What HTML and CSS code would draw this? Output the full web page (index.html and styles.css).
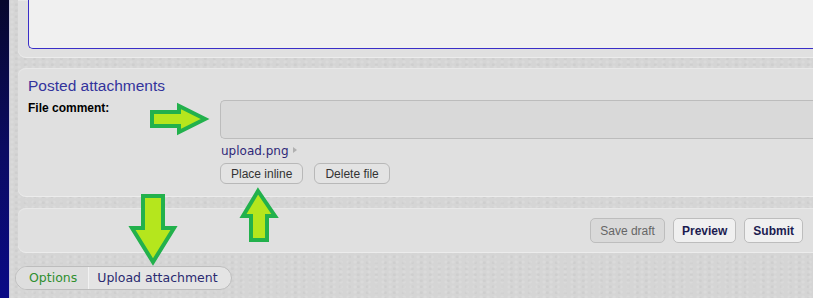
FILE: index.html
```html
<!DOCTYPE html>
<html>
<head>
    <title>Post reply</title>
    <link rel="stylesheet" href="styles.css">
</head>
<body>
    <div class="page">
        <div class="edge"></div>
        <div class="main">
            <div class="panel panel-top">
                <div class="message-box"></div>
            </div>

            <div class="panel panel-attach">
                <h3 class="panel-title">Posted attachments</h3>
                <div class="attach-row">
                    <label class="attach-label">File comment:</label>
                    <div class="attach-body">
                        <div class="comment-box"></div>
                        <div class="file-name">upload.png<span class="file-caret"></span></div>
                        <div class="file-actions">
                            <button class="small-button">Place inline</button>
                            <button class="small-button">Delete file</button>
                        </div>
                    </div>
                </div>
            </div>

            <div class="panel panel-submit">
                <button class="button button-draft">Save draft</button>
                <button class="button button-main">Preview</button>
                <button class="button button-main">Submit</button>
            </div>

            <div class="tabs">
                <span class="tab tab-options">Options</span>
                <span class="tab tab-upload">Upload attachment</span>
            </div>
        </div>
    </div>

    <svg class="arrows" width="813" height="298" viewBox="0 0 813 298">
        <path d="M152,112 L179,112 L179,106 L205,119 L179,132 L179,126 L152,126 Z" />
        <path d="M143,196 L163,196 L163,228 L174,228 L153,262 L132,228 L143,228 Z" />
        <path d="M258,191 L275,216 L267,216 L267,240 L251,240 L251,216 L243,216 Z" />
    </svg>
</body>
</html>
```

FILE: styles.css
```css
body {
    margin: 0;
    font-family: "Liberation Sans", Arial, sans-serif;
    overflow: hidden;
}

.page {
    display: flex;
    height: 298px;
}

.edge {
    width: 9px;
    background: linear-gradient(#07072e, #0b0b62 50%, #0a0a86);
    border-right: 1px solid #c9c9dc;
}

.main {
    flex: 1;
    padding-left: 8px;
    overflow: hidden;
    background-color: #d5d5d5;
    background-image:
        radial-gradient(circle at 30% 40%, rgba(255, 255, 255, 0.12) 1px, transparent 2px),
        radial-gradient(circle at 70% 80%, rgba(0, 0, 0, 0.03) 1px, transparent 2px);
    background-size: 7px 5px, 9px 6px;
}

.panel {
    margin-right: -12px;
    background-color: #e0e0e0;
    border-radius: 8px;
    box-shadow: 0 1px 0 #ececec, inset 0 1px 0 #e8e8e8;
}

.panel-top {
    padding: 0 0 8px 10px;
    border-top-left-radius: 0;
    border-top-right-radius: 0;
}

.message-box {
    height: 48px;
    background-color: #f0f0f0;
    border: 1px solid #3a2ec8;
    border-top: none;
    border-right: none;
    border-bottom-left-radius: 5px;
}

.panel-attach {
    margin-top: 11px;
    padding: 8px 10px 12px 10px;
}

.panel-title {
    margin: 0 0 4px 0;
    font-size: 15.5px;
    font-weight: normal;
    line-height: 20px;
    color: #33339c;
}

.attach-row {
    display: flex;
}

.attach-label {
    width: 192px;
    font-size: 12px;
    font-weight: bold;
    line-height: 16px;
    color: #000;
}

.attach-body {
    flex: 1;
}

.comment-box {
    height: 37px;
    background-color: #d9d9d9;
    border: 1px solid #bcbcbc;
    border-right: none;
    border-radius: 5px 0 0 5px;
}

.file-name {
    margin-top: 4px;
    margin-left: 1px;
    font-family: "DejaVu Sans", Verdana, sans-serif;
    font-size: 12px;
    line-height: 16px;
    color: #2f2878;
}

.file-caret {
    display: inline-block;
    margin-left: 4px;
    border-left: 4px solid #b0b0b0;
    border-top: 3px solid transparent;
    border-bottom: 3px solid transparent;
    vertical-align: 2px;
}

.file-actions {
    display: flex;
    gap: 11px;
    margin-top: 4px;
}

.small-button {
    height: 21px;
    padding: 0 10px;
    font-family: "Liberation Sans", Arial, sans-serif;
    font-size: 12px;
    color: #333;
    background-color: #e3e3e3;
    border: 1px solid #b8b8b8;
    border-radius: 6px;
}

.panel-submit {
    margin-top: 12px;
    height: 44px;
    box-sizing: border-box;
    padding: 10px 22px 9px 10px;
    display: flex;
    justify-content: flex-end;
    gap: 8px;
}

.button {
    height: 25px;
    padding: 0 8px;
    font-family: "Liberation Sans", Arial, sans-serif;
    font-size: 12px;
    border: 1px solid #bdbdbd;
    border-radius: 5px;
}

.button-draft {
    padding: 0 9px;
    color: #666;
    background-color: #d9d9d9;
}

.button-main {
    font-weight: bold;
    color: #1c1c50;
    background-color: #f0f0f0;
}

.tabs {
    display: inline-flex;
    margin: 14px 0 0 -3px;
    height: 24px;
    box-sizing: border-box;
    border: 1px solid #bdbdbd;
    border-radius: 12px;
    overflow: hidden;
    background-color: #e4e4e4;
    font-family: "DejaVu Sans", Verdana, sans-serif;
    font-size: 12.5px;
    line-height: 22px;
}

.tab-options {
    padding: 0 11px 0 13px;
    color: #2f8f2f;
    background-color: #dedede;
    border-right: 1px solid #f2f2f2;
}

.tab-upload {
    padding: 0 13px 0 8px;
    color: #2a2a70;
}

.arrows {
    position: absolute;
    top: 0;
    left: 0;
    pointer-events: none;
}

.arrows path {
    fill: #b5e61d;
    stroke: #22b14c;
    stroke-width: 4;
    stroke-linejoin: miter;
}
```
